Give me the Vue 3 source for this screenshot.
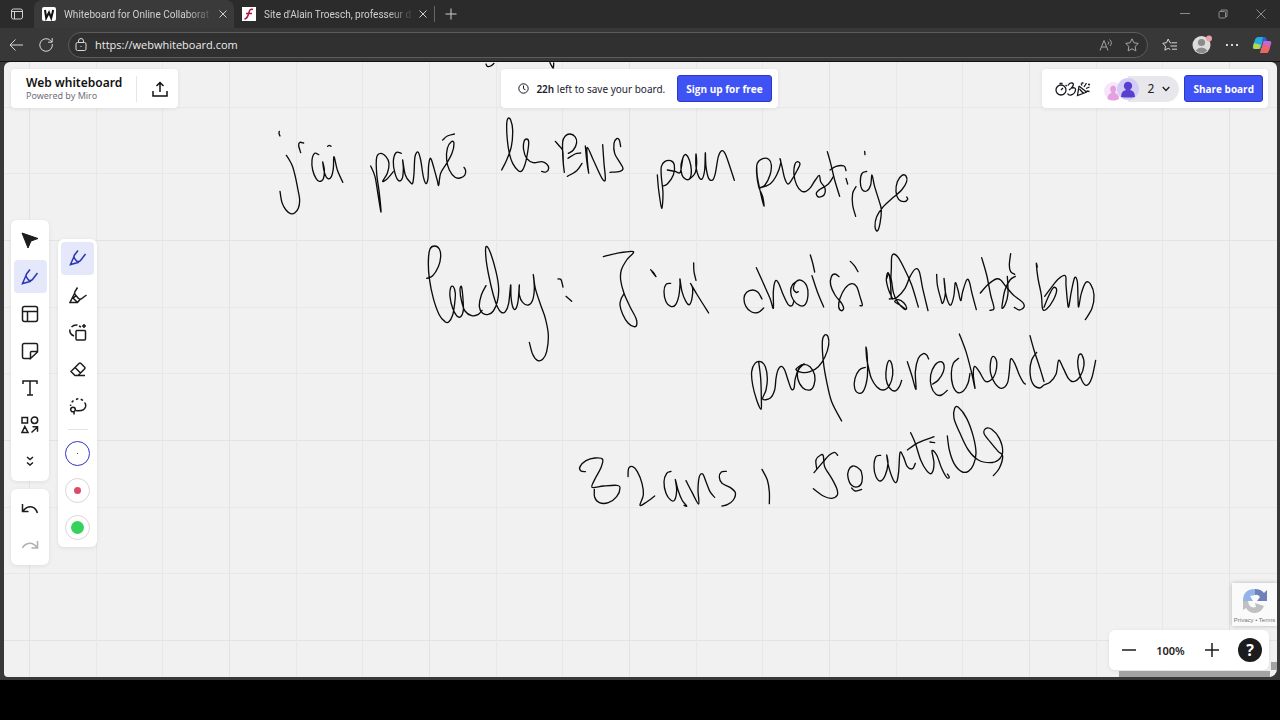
<script setup>
import { ref } from 'vue'

const address = ref('https://webwhiteboard.com')

const tabs = [
  { title: 'Whiteboard for Online Collaborat', icon: 'board', active: true },
  { title: "Site d'Alain Troesch, professeur d", icon: 'site', active: false }
]

// Pen strokes, grouped by the board area in which they were drawn (3 units per pixel).
const ink = [
  {
    x: 480, y: 50,
    strokes: ['18,42 22,49 32,48 42,40', '210,38 214,46 220,54 221,39']
  },
  {
    x: 260, y: 110,
    strokes: [
      '58,64 57,70 60,78',
      '79,136 88,150 98,170 106,200 114,240 119,270 115,295 104,309 92,311 78,300 66,278 60,244',
      '131,99 120,97 116,106 122,128',
      '176,134 164,130 156,150 158,180 168,205 178,214 190,206 193,180 188,156 194,190 204,206 214,200 220,175 222,140 232,180 248,216 244,208',
      '203,109 208,106 213,109',
      '332,168 345,200 355,260 363,306 358,250 350,190 350,142 362,130 378,140 387,160 382,190 368,214 382,206 400,185',
      '424,130 408,128 400,155 405,190 416,212 427,205 430,175 428,150 436,195 450,216 458,220 462,190 465,140 474,126 482,150 490,200 498,221 504,205 506,165 512,145 522,175 532,212 536,226 542,190 560,160 576,130 582,100 574,95 562,115 560,150 568,180 585,202 600,204 614,196 617,182 612,172',
      '548,90 562,78 583,72',
      '725,180 740,150 754,110 758,60 752,30 744,25 740,45 742,90 748,130 758,160 775,182 786,182 796,160 804,120 806,95 800,87 792,95 791,120 800,145 820,158 845,155 860,162 866,175 858,186 845,184',
      '886,94 898,108 908,122 910,160 913,187 909,150 908,96 916,78 930,72 945,80 950,98 940,120 925,130',
      '924,145 945,132 962,129',
      '966,160 950,182 922,199'
    ]
  },
  {
    x: 580, y: 110,
    strokes: [
      '16,108 20,150 26,190 22,150 22,112 40,150 66,205 76,208 72,160 68,104',
      '122,110 118,90 110,86 102,100 104,130 118,155 129,175 120,184 90,187',
      '232,195 236,240 245,295 249,250 244,200 244,170 254,155 272,152 283,165 280,195 262,222 248,228',
      '262,180 285,184 300,188 306,160 310,140 318,134 328,150 334,180 330,205 318,208 306,195 303,165 310,140',
      '330,206 345,190 350,160 348,132 348,170 356,200 366,207 374,180 376,128 378,170 386,205 398,210 406,190 415,140 426,122 436,132 448,165 463,211',
      '530,168 532,200 542,250 552,288 548,260 536,230 530,190 532,160 548,146 566,148 574,165 570,195 555,225 538,234 570,222 590,195 602,160 600,146 606,170 614,205 624,222 638,205 652,180 660,162 652,155 644,165 642,195 650,225 664,243 678,244 692,232 706,210 718,196 722,215 735,235 732,255 716,261 709,250 720,238 745,222 760,200',
      '742,125 752,160 764,210 779,259',
      '750,180 768,169 792,168 798,182',
      '798,205 803,222',
      '828,230 818,250 818,285 827,319',
      '854,124 855,134',
      '860,184 846,190 841,215 846,238 860,243 872,225 876,195 884,230 898,275 904,300 900,340 892,363 885,350 890,320 910,290 940,262 965,240 980,215 978,198 966,196 952,215 948,245 956,268 972,275 983,268 980,261'
    ]
  },
  {
    x: 410, y: 235,
    strokes: [
      '50,130 68,122 85,95 92,65 88,42 74,33 60,42 55,80 58,130 70,190 88,240 105,260 116,261 128,240 134,205 136,175 130,155 122,158 120,185 128,220 140,242 152,245 160,225 158,180 154,154 150,165 155,200 165,228 185,242 205,238 216,226',
      '228,152 214,180 208,215 218,235 235,238 250,228 262,200 266,160 258,110 240,50 228,35 228,70 236,120 250,180 262,215 274,232 286,230 296,205 302,150 303,185 308,215 316,223 324,200 328,150 328,180 338,202 355,210 368,195 373,160 370,118 376,160 392,210 406,250 415,300 410,350 398,373 382,376 368,358 358,322',
      '444,132 453,134 459,156',
      '468,184 485,199',
      '580,65 620,55 670,50 650,75 634,105 632,135 642,175 660,215 678,250 680,270 672,275 654,264 638,238 630,210 634,190 642,176',
      '722,104 730,112 738,125 726,110',
      '782,145 768,148 762,170 768,200 782,214 796,210 806,185 810,150 810,132 816,170 828,200 838,209 846,190 848,160 842,146 862,180 896,234',
      '851,84 852,110 858,136'
    ]
  },
  {
    x: 730, y: 235,
    strokes: [
      '96,192 84,172 68,165 50,172 42,190 48,215 65,231 85,232 101,219',
      '79,98 100,145 120,190 130,220 130,170 136,138 146,145 160,180 174,208 186,212 192,198',
      '205,170 198,172 190,160 198,140 214,136 230,152 234,180 226,208 210,212 190,195 182,170 188,148 205,136',
      '241,60 248,84 254,111',
      '246,122 262,170 281,216',
      '327,125 315,117 304,125 302,150 315,180 335,205 341,220 334,227 326,215 330,190 345,160 365,146 380,155 390,185 397,210 390,212',
      '361,79 373,92 384,110',
      '488,192 476,165 469,135 474,113 481,140 484,190 482,150 484,100 485,66 492,57 505,68 525,105 545,150 565,216',
      '478,192 500,188 525,160 540,125 556,102 568,110 578,160 594,227',
      '470,130 476,118 484,135 490,172 502,200 522,222 530,220 522,204 505,194 494,200 510,210 526,222',
      '620,118 622,150 632,190 638,205 646,175 642,130 646,170 656,205 664,208 672,180 676,143 684,165 692,197 698,170 710,135 718,140 726,175 739,224',
      '755,68 770,120 782,180 792,220 780,226',
      '751,174 775,148 798,132 812,135 828,155 850,180 878,202 882,216 868,225 853,217',
      '856,124 840,135 825,165 818,200 816,220 826,208 834,175 832,124',
      '842,56 838,90 842,110 854,118',
      '922,96 919,86 924,130 934,180 938,222 950,222 970,195 980,165 970,158 955,185 942,217',
      '944,184 962,160 985,132 1006,122 1008,150 1012,195 1016,216 1024,170 1034,128 1042,140 1044,190 1046,216 1054,175 1068,142 1082,148 1092,180 1086,220 1066,254',
      '86,380 92,430 94,490 93,523 80,495 68,450 65,410 75,385 92,380 106,395 112,430 108,465 98,492 120,490 134,465 138,430 144,405 154,394 164,405 174,435 184,462 192,460 196,430 208,398 222,387',
      '222,387 205,405 203,430 218,458 240,465 252,450 254,420 240,395 220,388 205,396 198,404 215,412 240,410 265,395 285,365 296,330 294,305 284,300 277,320 280,380 290,440 305,500 335,558',
      '406,397 388,405 375,430 374,460 388,475 402,465 412,425 412,370 408,336 410,370 416,400 424,430 440,455 460,465 478,452 488,420 486,390 478,376 470,395 468,430 478,458 495,468 508,455 515,436',
      '532,380 545,420 558,463 556,410 565,370 580,356 590,360 596,372',
      '608,447 625,435 640,410 642,390 632,380 615,390 602,420 604,455 618,478 635,480 652,466',
      '686,370 670,385 664,415 668,450 682,472 700,468 714,445 720,415',
      '688,297 708,350 724,410 735,460 730,420 734,394 748,410 765,438 782,436 796,415 800,380 790,364 782,380 782,415 795,445 815,460 832,445 838,410 842,372 854,385 868,420 880,442 886,447',
      '900,302 912,345 930,400 942,440',
      '920,352 905,375 900,410 908,445 928,459 942,450 960,442 978,418 986,376 1000,400 1015,430 1030,440 1050,425 1062,390 1056,360 1046,362 1044,395 1055,435 1070,451 1085,430 1097,376'
    ]
  },
  {
    x: 560, y: 400,
    strokes: [
      '76,215 62,212 60,200 78,182 105,174 128,178 122,205 106,235 96,262 130,258 170,256 180,264 170,290 145,308 118,308 104,292 103,268',
      '204,230 206,205 218,200 232,215 246,250 250,285 240,316 260,306 284,288',
      '333,214 320,220 312,245 318,280 332,300 344,300 350,270 346,238 354,270 366,300 380,318 372,316',
      '378,242 395,275 416,312 414,270 418,230 428,222 438,245 450,275 464,292',
      '499,214 484,216 478,232 486,250 510,262 526,278 520,300 502,314 486,318',
      '606,208 622,240 628,275 628,311',
      '833,166 824,157 808,165 790,185 762,218',
      '770,205 768,180 782,165 790,168 794,200 815,235 830,265 832,285 815,295 790,288 760,266',
      '892,202 878,198 866,210 864,232 875,256 895,260 906,245 904,215 892,202',
      '875,264 885,273 905,268',
      '962,166 948,170 942,200 948,230 962,243 976,225 984,190 980,165 986,200 1000,240 1010,246 1016,215 1020,158 1030,170 1042,200 1058,206 1066,190',
      '1052,98 1066,130 1082,180 1100,212 1115,220 1122,190 1116,152 1130,165 1145,205 1160,232 1168,232 1162,222',
      '1042,150 1075,128 1122,110',
      '1110,126 1124,128',
      '1162,108 1168,150 1182,190 1205,215 1225,214 1240,195 1248,160 1240,110 1220,55 1195,22 1184,25 1182,55 1200,100 1225,150 1255,180 1290,188 1315,180 1328,155 1318,115 1295,88 1278,85 1272,100 1290,125 1315,155 1328,168 1318,205 1300,227'
    ]
  }
]

// Smooths a list of points into one curve that passes through all of them.
function smooth(text) {
  const p = text.split(' ').map((pair) => pair.split(',').map(Number))
  let d = `M${p[0]}`
  for (let i = 0; i < p.length - 1; i++) {
    const a = p[i - 1] || p[i]
    const b = p[i]
    const c = p[i + 1]
    const e = p[i + 2] || c
    d += `C${b[0] + (c[0] - a[0]) / 6},${b[1] + (c[1] - a[1]) / 6} ${c[0] - (e[0] - b[0]) / 6},${c[1] - (e[1] - b[1]) / 6} ${c}`
  }
  return d
}
</script>

<template>
  <div class="screen">
    <div class="browser">
      <header class="tab-strip">
        <button class="tab-menu" aria-label="Tab actions">
          <svg width="14" height="14" viewBox="0 0 14 14"><rect x="1.5" y="2" width="11" height="10" rx="2" /><path d="M2 4.5h10M4.5 4.5V12" /></svg>
        </button>
        <div v-for="tab in tabs" :key="tab.title" class="tab" :class="{ active: tab.active }">
          <svg v-if="tab.icon === 'board'" width="14" height="14" viewBox="0 0 14 14"><rect width="14" height="14" rx="2" fill="#fff" /><path d="M3 3l1.2 8L7 5.5 9.200 11 11.200 3" fill="none" stroke="#111" stroke-width="2" /></svg>
          <svg v-else width="14" height="14" viewBox="0 0 14 14"><rect width="14" height="14" fill="#fff" /><path d="M11 2.500C8.500 1.500 7.500 3 6.800 6S5.500 11.500 2.500 12M4 6.500h6" fill="none" stroke="#b3123c" stroke-width="1.500" /></svg>
          <span class="tab-title">{{ tab.title }}</span>
          <button class="tab-close" :aria-label="'Close ' + tab.title"><svg width="8" height="8" viewBox="0 0 8 8"><path d="M.5.5l7 7M7.500.5l-7 7" /></svg></button>
        </div>
        <button class="new-tab" aria-label="New tab"><svg width="12" height="12" viewBox="0 0 12 12"><path d="M6 .5v11M.5 6h11" /></svg></button>
        <div class="window-buttons">
          <button aria-label="Minimize"><svg width="10" height="10" viewBox="0 0 10 10"><path d="M0 4.500h10" /></svg></button>
          <button aria-label="Restore"><svg width="10" height="10" viewBox="0 0 10 10"><rect x="1" y="2.500" width="6.500" height="6.500" rx="1" /><path d="M3 2.500V1h6v6.500H7.500" /></svg></button>
          <button aria-label="Close window"><svg width="10" height="10" viewBox="0 0 10 10"><path d="M.5.5l9 9M9.500.5l-9 9" /></svg></button>
        </div>
      </header>

      <nav class="address-row">
        <button aria-label="Back"><svg width="16" height="16" viewBox="0 0 16 16"><path d="M15 8H2M7.500 2.500L2 8l5.500 5.500" /></svg></button>
        <button aria-label="Refresh"><svg width="16" height="16" viewBox="0 0 16 16"><path d="M14.300 7A6.300 6.300 0 1 1 12.600 3.600L14 5M14.200 1v4.200H10" /></svg></button>
        <div class="address">
          <svg width="12" height="14" viewBox="0 0 12 14"><rect x="1" y="4.500" width="10" height="8" rx="1.500" /><path d="M3.500 4.500V3a2.500 2.500 0 0 1 5 0v1.500M6 8v1" /></svg>
          <input v-model="address" aria-label="Address" type="text">
          <button class="dim" aria-label="Read aloud"><svg width="14" height="14" viewBox="0 0 14 14"><path d="M1 12.500L5 2.500l4 10M2.500 9h5M9 3.500q1.500 1 0 3M10.500 1.500q3.500 3 .5 6.500" /></svg></button>
          <button class="dim" aria-label="Add to favorites"><svg width="14" height="14" viewBox="0 0 14 14"><path d="M7 .8l1.900 4 4.400.6-3.200 3.100.8 4.400L7 10.800l-3.900 2.100.8-4.400L.7 5.400l4.400-.6z" /></svg></button>
        </div>
        <button aria-label="Favorites"><svg width="16" height="14" viewBox="0 0 16 14"><path d="M9 5L8 4.700 6.200 1 4.500 4.700.8 5.300l2.700 2.900-.6 4 3.300-1.900 2.100 1.200M9.500 4.800H15M8.500 8H15M10 11.200h5" /></svg></button>
        <button aria-label="Profile"><svg width="20" height="20" viewBox="0 0 20 20" stroke="none"><g stroke="none"><circle cx="9.500" cy="10" r="9" fill="#dedcda" /><circle cx="9.500" cy="7.500" r="3.600" fill="#8b8b8b" /><path d="M3.500 15.500q6-6 12 0-5.500 5.500-12 0" fill="#8b8b8b" /><circle cx="17" cy="3.500" r="3" fill="#e8a0ac" /></g></svg></button>
        <button aria-label="Settings and more"><svg width="12" height="4" viewBox="0 0 12 4"><path d="M0 2h2M5 2h2M10 2h2" stroke-width="2" /></svg></button>
        <button aria-label="Copilot"><svg width="20" height="20" viewBox="0 0 20 20"><g stroke="none"><path d="M6 2h6l-3.500 12H2.500Q0 14 1 11L3 4.500Q4 2 6 2z" fill="#26a9dc" /><path d="M2 8l7 2-2 4H3q-3 0-1-6z" fill="#b8d947" /><path d="M12 2q2 0 2.500 2l.7 2H10l1-4z" fill="#2467d4" /><path d="M14 18H8l3.500-12h6Q20 6 19 9l-2 6.500Q16 18 14 18z" fill="#c965cf" /><path d="M18 12l-7-2-3 8h6q2 0 3-2.500z" fill="#f0655c" /></g></svg></button>
      </nav>

      <main class="board">
        <svg class="ink" role="img" aria-label="Handwritten notes">
          <g v-for="(part, n) in ink" :key="n" :transform="`translate(${part.x - 4} ${part.y - 62}) scale(.33333)`">
            <path v-for="(stroke, i) in part.strokes" :key="i" :d="smooth(stroke)" />
          </g>
        </svg>

        <div class="top-panels">
          <section class="panel brand-panel">
            <div class="brand">
              <h1>Web whiteboard</h1>
              <p>Powered by Miro</p>
            </div>
            <button class="export" aria-label="Export"><svg width="16" height="16" viewBox="0 0 16 16"><path d="M1 10v5h14v-5M8 11V1.500M4.500 5L8 1.500 11.500 5" /></svg></button>
          </section>
          <section class="panel save-panel">
            <svg width="11" height="11" viewBox="0 0 11 11"><circle cx="5.500" cy="5.500" r="4.700" /><path d="M5.500 2.500v3.200l2 1.200" /></svg>
            <p><strong>22h</strong> left to save your board.</p>
            <button class="primary">Sign up for free</button>
          </section>
          <section class="panel share-panel">
            <button class="reactions" aria-label="Timer and reactions">
              <svg width="36" height="18" viewBox="0 0 36 18"><circle cx="6" cy="10" r="5" /><path d="M6 10l2-2M4.500 3.500h3M10.500 5l1.500 1M13 5.500q1.500-3 4-2.500 3 .8-.5 5Q21 7 20.500 10q-.5 4-4.500 5-2.500.5-3.500-1.500M16 8.500l-2 1.500M24 6l-1.500 9.500L32 12M24 6l7.500 6M24.500 9l4 4.500M27 5.500l-1-2M29 7l2.500-4M31 8.500l3.500-1.500M33 4.500h2M31.500 11l3 .5M26.500 3h2" /></svg>
            </button>
            <button class="people" aria-label="2 people on this board">
              <svg width="36" height="26" viewBox="0 0 36 26"><circle cx="9" cy="15" r="9" fill="#f7e6f7" /><path d="M3.500 23q0-5 4-6Q4 11 9 9.500q5 1 2 7.500 4 1 4 6-6 3-11.500 0z" fill="#e5a1df" /><circle cx="24" cy="13" r="11" fill="#d4ccf6" /><circle cx="24" cy="10" r="4.200" fill="#5940cc" /><path d="M17 21q0-6 5-7h4q5 1 5 7-7 1-14 0z" fill="#5940cc" /></svg>
              <span>2</span>
              <svg width="8" height="6" viewBox="0 0 8 6"><path d="M.7 1L4 4.500 7.300 1" fill="none" stroke="#222" stroke-width="1.300" /></svg>
            </button>
            <button class="primary">Share board</button>
          </section>
        </div>

        <div class="side-tools">
          <div class="tool-column">
            <div class="panel tools">
              <button aria-label="Select"><svg viewBox="0 0 18 18"><path d="M1 2l16 5.500-7 2.500-3 7z" fill="#1c1c1e" stroke-width="1" /></svg></button>
              <button class="selected" aria-label="Pen"><svg viewBox="0 0 18 18"><path d="M9 1.500L5.500 6q-1.200 2 .5 4l1.500 2q2.500 1.500 4-.5L16.500 5M5.200 7L1.500 15.500 10 13.200" /></svg></button>
              <button aria-label="Templates"><svg viewBox="0 0 18 18"><rect x="1.500" y="1.500" width="15" height="15" rx="2" /><path d="M1.500 6.500h15M6.500 6.500v10" /></svg></button>
              <button aria-label="Sticky note"><svg viewBox="0 0 18 18"><path d="M9.500 16.500H3a1.500 1.500 0 0 1-1.500-1.500V3A1.500 1.500 0 0 1 3 1.500h12A1.500 1.500 0 0 1 16.500 3v7l-7 6.500v-6q0-1 1-1h6" /></svg></button>
              <button aria-label="Text"><svg viewBox="0 0 18 18"><path d="M2 5V2h14v3M9 2v14M6 16h6" /></svg></button>
              <button aria-label="Shapes"><svg viewBox="0 0 18 18"><rect x="1" y="1.500" width="5.500" height="5.500" /><circle cx="13.500" cy="4.200" r="3.200" /><path d="M3.800 10.500L1 16.500h6zM10.500 16.500l6-5.500M11.500 10.700h5v5" /></svg></button>
              <button aria-label="More tools"><svg viewBox="0 0 18 18"><path d="M6 4l3 2.500L12 4M6 9.500L9 12l3-2.500" /></svg></button>
            </div>
            <div class="panel tools">
              <button aria-label="Undo"><svg viewBox="0 0 18 18"><path d="M1.500 4v7.500h6M2 11Q6 6 11 7q4 1 5.500 6" /></svg></button>
              <button class="disabled" aria-label="Redo" disabled><svg viewBox="0 0 18 18"><path d="M16.500 4v7h-6M16 10.500Q12 5 7 6.500q-4 1-5.500 4.500" /></svg></button>
            </div>
          </div>
          <div class="panel tools pens">
            <button class="selected" aria-label="Draw"><svg viewBox="0 0 18 18"><path d="M9 1.500L5.500 6q-1.200 2 .5 4l1.500 2q2.500 1.500 4-.5L16.500 5M5.200 7L1.500 15.500 10 13.200" /></svg></button>
            <button aria-label="Highlighter"><svg viewBox="0 0 18 18"><path d="M8.500 1.500L6 5.500q-1 2 .5 3.500l3 3.500q2 1.500 4-.5L17.500 9M5.500 7.500L1 16.500h7.500l2.500-3M3.500 11.500l5 5M7 9.500l-3 3" /></svg></button>
            <button aria-label="Shape recognition"><svg viewBox="0 0 18 18"><rect x="7" y="7.500" width="9.500" height="9.500" rx="1" /><path d="M5 13Q0 11 1 6.500M2.500 4Q5 1.500 8.500 2M10 3l2 1" /><path d="M15 1v4M13 3h4" /></svg></button>
            <button aria-label="Eraser"><svg viewBox="0 0 18 18"><path d="M2 11.500L10 3.500q1-1 2 0L15.500 7q1 1 0 2L9 15.500H6L2 11.500zM6 7.500l5.500 5.500M9 15.500h7" /></svg></button>
            <button aria-label="Lasso"><svg viewBox="0 0 18 18"><path d="M7 13.500q8 1 9.500-3.500.7-3-1-4.500" /><path d="M14 3.500q-4-3-8-.5Q2 4.500 1.500 9" stroke-dasharray="2.500 2.500" /><circle cx="4" cy="12.500" r="2.300" /><path d="M5 14.500v3" /></svg></button>
            <hr>
            <button class="swatch chosen" aria-label="Black, thin"><i class="ink-dot black"></i></button>
            <button class="swatch" aria-label="Red, medium"><i class="ink-dot red"></i></button>
            <button class="swatch" aria-label="Green, thick"><i class="ink-dot green"></i></button>
          </div>
        </div>

        <aside class="captcha">
          <svg width="28" height="28" viewBox="0 0 28 28"><path d="M2 14Q2 2 14 2v6l-5 1 3 5z" fill="#92b4e8" /><path d="M14 2q6 0 9 4l3-3v11H16l3-4q-2-3-5-2z" fill="#7080bb" /><path d="M2 14l5 0q1 8 8 6l-1-4 9 3q-3 7-9 7-6 0-9-5l-3 2z" fill="#bfc0c1" /></svg>
          <p><a href="#privacy">Privacy</a> • <a href="#terms">Terms</a></p>
        </aside>

        <div class="scroll-thumb-y"></div>
        <div class="zoom-area">
          <div class="panel zoom-panel">
            <button aria-label="Zoom out"><svg width="14" height="14" viewBox="0 0 14 14"><path d="M0 7h14" /></svg></button>
            <output>100%</output>
            <button aria-label="Zoom in"><svg width="14" height="14" viewBox="0 0 14 14"><path d="M0 7h14M7 0v14" /></svg></button>
            <button class="help" aria-label="Help">?</button>
          </div>
          <div class="scroll-thumb-x"></div>
        </div>
      </main>
    </div>
  </div>
</template>

<style>
html,
body {
  background: #000;
}
</style>

<style scoped>
* {
  box-sizing: border-box;
}

.screen {
  display: flex;
  flex-direction: column;
  min-height: 100vh;
  padding-bottom: 40px;
  background: #000;
  font-family: "Noto Sans", "Open Sans", sans-serif;
}

button {
  display: flex;
  align-items: center;
  justify-content: center;
  flex: none;
  margin: 0;
  padding: 0;
  border: 0;
  background: none;
  color: inherit;
  font: inherit;
}

h1,
p {
  margin: 0;
}

.browser {
  display: flex;
  flex: 1;
  flex-direction: column;
  background: #383838;
}

.tab-strip {
  display: flex;
  height: 28px;
  background: #2b2b2b;
  color: #d0d0d0;
  font-family: Roboto, "Noto Sans", sans-serif;
  font-size: 10px;
}

.tab-strip svg,
.address-row svg {
  flex: none;
}

.tab-strip button svg,
.address-row button svg,
.address > svg {
  fill: none;
  stroke: currentColor;
}

.tab-menu {
  width: 34px;
}

.tab {
  display: flex;
  align-items: center;
  width: 200px;
  padding: 0 6px 0 8px;
}

.tab.active {
  border-radius: 8px 8px 0 0;
  background: #3a3a3a;
}

.tab-title {
  flex: 1;
  margin-left: 8px;
  white-space: nowrap;
  mask-image: linear-gradient(90deg, #000 80%, #0003 94%);
}

.tab-close {
  width: 10px;
}

.new-tab {
  align-self: center;
  width: 32px;
  height: 16px;
  border-left: 1px solid #666;
}

.window-buttons {
  display: flex;
  gap: 28px;
  margin-left: auto;
  padding-right: 14px;
  color: #8c8c8c;
}

.window-buttons svg {
  stroke-width: 1;
}

.address-row {
  display: flex;
  align-items: center;
  gap: 14px;
  height: 34px;
  padding: 0 8px;
  border-bottom: 1px solid #111;
  color: #d8d8d8;
}

.address {
  display: flex;
  flex: 1;
  align-items: center;
  gap: 12px;
  height: 26px;
  padding: 0 8px 0 6px;
  border: 1px solid #5c5c5c;
  border-radius: 13px;
  background: #303030;
}

.address input {
  flex: 1;
  min-width: 0;
  margin-left: -4px;
  padding: 0;
  border: 0;
  outline: 0;
  background: none;
  color: #ececec;
  font-family: "Open Sans", "Noto Sans", sans-serif;
  font-size: 11px;
}

.dim {
  color: #a4a4a4;
}

.board {
  position: relative;
  display: flex;
  flex: 1;
  flex-direction: column;
  overflow: hidden;
  margin: 0 3px 3px 4px;
  padding: 7px 9px 0 7px;
  border-radius: 6px 6px 8px 4px;
  background-color: #f1f1f1;
  background-image:
    linear-gradient(90deg, #e3e3e3 1px, transparent 1px, transparent 67px, #e8e8e8 67px, #e8e8e8 68px, transparent 68px, transparent 133px, #e8e8e8 133px, #e8e8e8 134px, transparent 134px),
    linear-gradient(#e3e3e3 1px, transparent 1px, transparent 67px, #e8e8e8 67px, #e8e8e8 68px, transparent 68px, transparent 133px, #e8e8e8 133px, #e8e8e8 134px, transparent 134px);
  background-position: 25px 178px;
  background-size: 200px 200px;
}

.ink {
  position: absolute;
  inset: 0;
  width: 100%;
  height: 100%;
  fill: none;
  stroke: #0c0c0c;
  stroke-linecap: round;
  stroke-linejoin: round;
  stroke-width: 4;
}

.panel {
  border-radius: 4px;
  background: #fff;
  box-shadow: 0 1px 4px #00000014;
}

.top-panels {
  position: relative;
  display: grid;
  grid-template-columns: 1fr auto 1fr;
}

.top-panels .panel {
  display: flex;
  align-items: center;
  height: 39px;
}

.brand-panel {
  justify-self: start;
}

.brand {
  width: 126px;
  padding-left: 15px;
  border-right: 1px solid #e6e6ea;
}

.brand h1 {
  color: #111;
  font-size: 12px;
  font-weight: 600;
  line-height: 14px;
  white-space: nowrap;
}

.brand p {
  color: #6f6f7d;
  font-size: 9px;
  line-height: 12px;
}

.export {
  width: 41px;
  padding-left: 5px;
}

.export svg {
  fill: none;
  stroke: #111;
  stroke-width: 1.5;
}

.save-panel {
  gap: 7px;
  padding: 0 6px 0 17px;
  color: #1b1b30;
  font-size: 10px;
}

.save-panel svg,
.reactions svg {
  fill: none;
  stroke: #181820;
}

.save-panel strong {
  font-weight: 600;
}

.primary {
  height: 27px;
  margin-left: 5px;
  padding: 0 8px;
  border: 1px solid #3036c4;
  border-radius: 3px;
  background: #3f53f5;
  color: #fff;
  font-family: "Open Sans", "Noto Sans", sans-serif;
  font-size: 10px;
  font-weight: 700;
}

.share-panel {
  justify-self: end;
  padding-right: 5px;
}

.reactions {
  margin: 0 13px;
}

.reactions svg {
  stroke-width: 1.3;
}

.people {
  gap: 8px;
  height: 26px;
  padding-right: 9px;
  border-radius: 13px;
  background: linear-gradient(90deg, #fff 24px, #e8e8ec 24px);
  color: #222;
  font-size: 12px;
}

.side-tools {
  position: relative;
  display: flex;
  flex: 1;
  align-items: center;
  align-self: flex-start;
  gap: 9px;
}

.tool-column {
  display: grid;
  gap: 8px;
}

.tools {
  display: flex;
  flex-direction: column;
  align-items: center;
  gap: 4px;
  width: 38px;
  padding: 3px;
  border-radius: 6px;
  color: #1c1c1e;
}

.tools button {
  width: 33px;
  height: 33px;
  border-radius: 4px;
}

.tools svg {
  width: 18px;
  height: 18px;
  fill: none;
  stroke: currentColor;
  stroke-width: 1.5;
}

.tools .selected {
  background: #e5e8fb;
  color: #2a37b2;
}

.tools .disabled {
  color: #b0b0b4;
}

.pens {
  width: 39px;
}

.pens hr {
  width: 20px;
  margin: 2px 0 3px;
  border: 0;
  border-top: 1px solid #e4e4e8;
}

.tools .swatch {
  width: 25px;
  height: 25px;
  margin: 4px 0;
  border: 1px solid #dcd6d6;
  border-radius: 50%;
}

.tools .chosen {
  border-color: #3036c4;
}

.ink-dot {
  border-radius: 50%;
}

.black {
  width: 1px;
  height: 1px;
  background: #111;
}

.red {
  width: 7px;
  height: 7px;
  background: #dc4a6a;
}

.green {
  width: 13px;
  height: 13px;
  background: #35d35e;
}

.captcha {
  position: absolute;
  right: 0;
  bottom: 51px;
  display: flex;
  flex-direction: column;
  align-items: center;
  gap: 1px;
  width: 45px;
  padding: 4px 0 2px;
  background: #fafafa;
  box-shadow: 0 0 4px #00000040;
  color: #777;
  font-family: "Liberation Sans", sans-serif;
  font-size: 6px;
  line-height: 8px;
  white-space: nowrap;
}

.captcha a {
  color: inherit;
  text-decoration: none;
}

.zoom-area {
  position: absolute;
  right: 8px;
  bottom: 0;
}

.zoom-panel {
  display: flex;
  align-items: center;
  height: 40px;
  padding: 0 7px 0 13px;
  border-radius: 6px;
  color: #1c1c1e;
}

.zoom-panel svg {
  stroke: currentColor;
  stroke-width: 1.5;
}

.zoom-panel output {
  width: 69px;
  font-size: 11px;
  font-weight: 600;
  text-align: center;
}

.zoom-panel .help {
  width: 24px;
  height: 24px;
  margin-left: 19px;
  border-radius: 50%;
  background: #1c1c1e;
  color: #fff;
  font-size: 16px;
  font-weight: 700;
}

.scroll-thumb-x {
  height: 6px;
  margin: 1px -1px 0 10px;
  background: #a3a3a3;
}

.scroll-thumb-y {
  position: absolute;
  right: 0;
  bottom: 7px;
  width: 6px;
  height: 8px;
  background: #a3a3a3;
}
</style>
